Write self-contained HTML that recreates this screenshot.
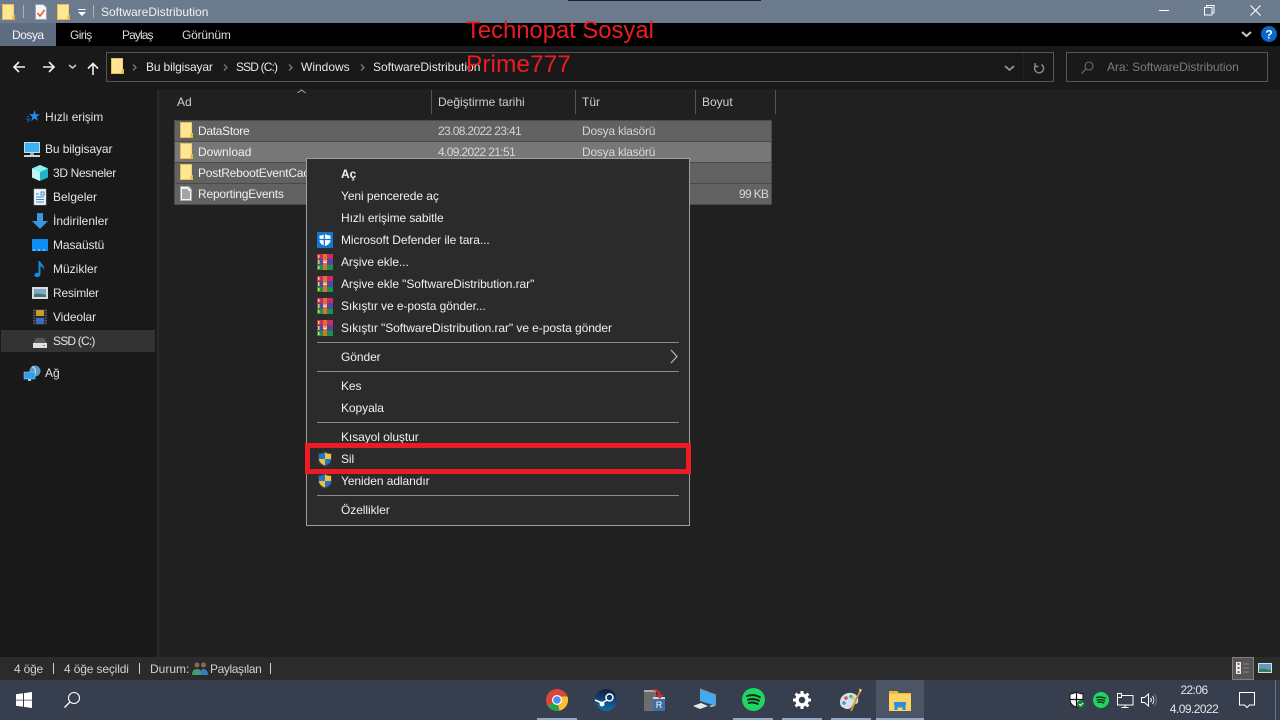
<!DOCTYPE html>
<html lang="tr"><head><meta charset="utf-8"><title>SoftwareDistribution</title>
<style>
html,body{margin:0;padding:0;width:1280px;height:720px;overflow:hidden;background:#202020}
body{font-family:"Liberation Sans",sans-serif;font-size:12px;color:#e4e4e4;position:relative}
.a{position:absolute}
.t{position:absolute;white-space:nowrap;line-height:16px;height:16px}
svg{position:absolute;overflow:visible}
.sep{position:absolute;left:317px;width:362px;height:1px;background:#8a8a8a}
.m{color:#f0f0f0;letter-spacing:-.07px}
.ul{position:absolute;top:718px;height:2px;background:#93a8c8}
</style></head><body>
<svg width="0" height="0" style="position:absolute"><defs>
<symbol id="folder" viewBox="0 0 13 16"><path d="M0 0h12v11h1v5H0z" fill="#e9bf55"/><path d="M1 1h10.500v10.500H1z" fill="#ffe694"/><path d="M1 11h9.500v4H1z" fill="#ffe694"/><path d="M10.500 11.500H13V16h-2.500z" fill="#e6b640"/></symbol>
<symbol id="rar" viewBox="0 0 16 16"><rect x="0" y="0" width="16" height="5" fill="#c92c66"/><rect x="0" y="5" width="16" height="6" fill="#54479f"/><rect x="0" y="11" width="16" height="5" fill="#17964a"/><rect x="6" y="0" width="4" height="16" fill="#e0702a"/><rect x="1" y="1" width="1.500" height="3" fill="#f5d040"/><rect x="1" y="6" width="1.500" height="4" fill="#f5d040"/><rect x="1" y="12" width="1.500" height="3" fill="#f5d040"/><path d="M6.500 6v3h3V6H8.700v2H7.300V6z" fill="#fff"/></symbol>
<symbol id="uac" viewBox="0 0 14 16"><path d="M7 0c2 1.500 4 2 7 2v6c0 4-3 6.500-7 8-4-1.500-7-4-7-8V2c3 0 5-.5 7-2z" fill="#3a3f48"/><path d="M7 1.500V8H1V3c2.500 0 4.500-.5 6-1.500z" fill="#1a78d0"/><path d="M7 1.500c1.500 1 3.500 1.500 6 1.500v5H7z" fill="#f6c235"/><path d="M1 8h6v6.500C3.500 13.200 1 11 1 8z" fill="#f6c235"/><path d="M7 8h6c0 3-2.500 5.200-6 6.500z" fill="#1a78d0"/></symbol>
</defs></svg>

<!-- title bar -->
<div class="a" style="left:0;top:0;width:1280px;height:23px;background:#6b7a8d"></div>
<div class="a" style="left:568px;top:0;width:193px;height:1px;background:#222"></div>
<svg style="left:2px;top:4px" width="13" height="16"><use href="#folder" width="13" height="16"/></svg>
<div class="a" style="left:23px;top:5px;width:1px;height:13px;background:#a9b2be"></div>
<svg style="left:35px;top:4px" width="12" height="16"><path d="M.5.5h8l3 3v12H.5z" fill="#f7f7f7" stroke="#9aa3ad"/><path d="M2.500 9l2.500 3 4.500-6" stroke="#e2572a" stroke-width="1.500" fill="none"/></svg>
<svg style="left:57px;top:4px" width="13" height="16"><use href="#folder" width="13" height="16"/></svg>
<svg style="left:78px;top:9px" width="10" height="8"><path d="M0 .5h7.500" stroke="#fff"/><path d="M0 3h8L4 7z" fill="#fff"/></svg>
<div class="a" style="left:93px;top:5px;width:1px;height:13px;background:#a9b2be"></div>
<div class="t" style="left:101px;top:4px;color:#f2f2f2">SoftwareDistribution</div>
<svg style="left:1159px;top:10px" width="11" height="2"><rect width="10" height="1" fill="#fff"/></svg>
<svg style="left:1204px;top:5px" width="11" height="11"><path d="M.5 2.500h7.500v7.500H.5zM2.500 2.500V.5H10v7.500H8" fill="none" stroke="#fff"/></svg>
<svg style="left:1250px;top:5px" width="11" height="11"><path d="M.5.500l10 10M10.500.500l-10 10" stroke="#fff" stroke-width="1.100"/></svg>

<!-- ribbon tabs -->
<div class="a" style="left:0;top:23px;width:1280px;height:23px;background:#000"></div>
<div class="a" style="left:0;top:23px;width:56px;height:23px;background:#5d6c80"></div>
<div class="t" style="left:12px;top:27px;color:#f4f4f4;letter-spacing:-.5px">Dosya</div>
<div class="t" style="left:70px;top:27px;color:#ddd;letter-spacing:-.6px">Giriş</div>
<div class="t" style="left:122px;top:27px;color:#ddd;letter-spacing:-.9px">Paylaş</div>
<div class="t" style="left:182px;top:27px;color:#ddd;letter-spacing:-.2px">Görünüm</div>
<svg style="left:1241px;top:31px" width="11" height="7"><path d="M1 1l4.500 4L10 1" fill="none" stroke="#c8c8c8" stroke-width="2"/></svg>
<svg style="left:1261px;top:26px" width="16" height="16"><circle cx="8" cy="8" r="8" fill="#0a66c8"/><text x="8" y="12.500" font-family="Liberation Sans" font-size="12" font-weight="700" fill="#fff" text-anchor="middle">?</text></svg>

<!-- toolbar -->
<div class="a" style="left:0;top:46px;width:1280px;height:43px;background:#191919"></div>
<svg style="left:13px;top:61px" width="13" height="12"><path d="M12 6H1.500M6 1L1 6l5 5" fill="none" stroke="#f0f0f0" stroke-width="1.600"/></svg>
<svg style="left:43px;top:61px" width="13" height="12"><path d="M0 6h10.500M6 1l5 5-5 5" fill="none" stroke="#f0f0f0" stroke-width="1.600"/></svg>
<svg style="left:68px;top:64px" width="9" height="6"><path d="M1 1l3.500 3L8 1" fill="none" stroke="#ccc" stroke-width="1.500"/></svg>
<svg style="left:87px;top:62px" width="12" height="13"><path d="M6 13V2M1 6.500l5-5 5 5" fill="none" stroke="#f0f0f0" stroke-width="1.600"/></svg>
<div class="a" style="left:106px;top:52px;width:946px;height:28px;border:1px solid #555;background:#181818"></div>
<svg style="left:111px;top:58px" width="13" height="16"><use href="#folder" width="13" height="16"/></svg>
<svg style="left:132px;top:64px" width="6" height="8"><path d="M1 .5l3 3-3 3" fill="none" stroke="#777" stroke-width="1.400"/></svg>
<div class="t" style="left:146px;top:59px;color:#e8e8e8;letter-spacing:-.15px">Bu bilgisayar</div>
<svg style="left:223px;top:64px" width="6" height="8"><path d="M1 .5l3 3-3 3" fill="none" stroke="#777" stroke-width="1.400"/></svg>
<div class="t" style="left:236px;top:59px;color:#e8e8e8;letter-spacing:-.85px">SSD (C:)</div>
<svg style="left:288px;top:64px" width="6" height="8"><path d="M1 .5l3 3-3 3" fill="none" stroke="#777" stroke-width="1.400"/></svg>
<div class="t" style="left:301px;top:59px;color:#e8e8e8">Windows</div>
<svg style="left:360px;top:64px" width="6" height="8"><path d="M1 .5l3 3-3 3" fill="none" stroke="#777" stroke-width="1.400"/></svg>
<div class="t" style="left:373px;top:59px;color:#e8e8e8">SoftwareDistribution</div>
<svg style="left:1004px;top:65px" width="11" height="7"><path d="M1 1l4.500 4L10 1" fill="none" stroke="#999" stroke-width="1.700"/></svg>
<div class="a" style="left:1023px;top:53px;width:1px;height:27px;background:#232323"></div>
<svg style="left:1033px;top:62px" width="12" height="12"><path d="M3 3a4.500 4.500 0 1 0 5.500-.5" fill="none" stroke="#8a8a8a" stroke-width="1.400"/><path d="M2 1v3.500h3.500" fill="none" stroke="#8a8a8a" stroke-width="1.400"/></svg>
<div class="a" style="left:1066px;top:52px;width:200px;height:28px;border:1px solid #555;background:#191919"></div>
<svg style="left:1081px;top:61px" width="13" height="13"><circle cx="8" cy="5" r="4" fill="none" stroke="#6e6e6e" stroke-width="1.100"/><path d="M5 8l-4.500 4.500" stroke="#6e6e6e" stroke-width="1.200"/></svg>
<div class="t" style="left:1107px;top:59px;color:#7c7c7c;letter-spacing:-.04px">Ara: SoftwareDistribution</div>

<!-- sidebar -->
<div class="a" style="left:0;top:89px;width:157px;height:568px;background:#191919"></div>
<div class="a" style="left:157px;top:89px;width:2px;height:568px;background:#2a2a2a"></div>
<div class="a" style="left:1px;top:330px;width:154px;height:22px;background:#333"></div>
<svg style="left:26px;top:110px" width="14" height="14"><path d="M8.500 0l1.300 4.200H14l-3.400 2.600 1.300 4.200-3.400-2.600-3.400 2.600 1.300-4.200L3 4.200h4.200z" fill="#1e90f0"/><path d="M0 9h4M1 6.500h2M1 12l3-2" stroke="#1670bb"/></svg>
<div class="t" style="left:45px;top:109px;letter-spacing:-.1px">Hızlı erişim</div>
<svg style="left:24px;top:142px" width="16" height="15"><rect x=".5" y=".5" width="15" height="10" fill="#3fb0f0" stroke="#bcdcf0"/><rect x="6" y="11" width="4" height="2" fill="#9aa"/><rect y="13" width="16" height="2" fill="#cfd4d8"/></svg>
<div class="t" style="left:45px;top:141px;letter-spacing:-.1px">Bu bilgisayar</div>
<svg style="left:32px;top:165px" width="16" height="16"><path d="M8 0l8 3.500v9L8 16l-8-3.500v-9z" fill="#1fb6c8"/><path d="M8 0l8 3.500L8 7 0 3.500z" fill="#8ef0f0"/><path d="M0 3.500L8 7v9l-8-3.500z" fill="#c4f6f6"/></svg>
<div class="t" style="left:53px;top:165px;letter-spacing:-.35px">3D Nesneler</div>
<svg style="left:34px;top:189px" width="12" height="16"><rect width="12" height="16" fill="#f2f4f6" stroke="#bbb" stroke-width=".5"/><path d="M2 5h3M2 8h8M2 10.500h8M2 13h8M7 3h3v3H7z" stroke="#2f8fd8" fill="none"/></svg>
<div class="t" style="left:53px;top:189px">Belgeler</div>
<svg style="left:32px;top:213px" width="16" height="16"><path d="M5 0h6v8h5l-8 8-8-8h5z" fill="#3a96e0"/></svg>
<div class="t" style="left:53px;top:213px">İndirilenler</div>
<svg style="left:32px;top:239px" width="16" height="12"><rect width="16" height="12" fill="#0d8ef0"/><path d="M1 11h14" stroke="#bfe4ff" stroke-dasharray="2 3"/></svg>
<div class="t" style="left:53px;top:237px;letter-spacing:-.1px">Masaüstü</div>
<svg style="left:34px;top:261px" width="12" height="16"><path d="M4.500 0h1.500c.5 3 5 4 4 9-.5-2-2-3.500-3.500-4v8.500c0 1.500-1.500 2.500-3.500 2.500S0 15 .5 13.500 3 11.500 4.500 12z" fill="#0f8fe0"/></svg>
<div class="t" style="left:53px;top:261px">Müzikler</div>
<svg style="left:32px;top:287px" width="16" height="12"><rect width="16" height="12" fill="#d8dce0"/><rect x="2" y="2" width="12" height="8" fill="#7da6c8"/><path d="M2 7c4-1 8 0 12 1v2H2z" fill="#3f7a63"/></svg>
<div class="t" style="left:53px;top:285px;letter-spacing:-.2px">Resimler</div>
<svg style="left:33px;top:309px" width="14" height="16"><rect width="14" height="16" fill="#2c2c2c"/><rect x="3" y="1" width="8" height="6" fill="#c79a30"/><rect x="3" y="9" width="8" height="6" fill="#3a6ec0"/><path d="M1 1v14M13 1v14" stroke="#888" stroke-dasharray="1 1.500"/></svg>
<div class="t" style="left:53px;top:309px;letter-spacing:-.1px">Videolar</div>
<svg style="left:33px;top:338px" width="14" height="10"><path d="M3 0h8l3 6v4H0V6z" fill="#5a5a5a"/><rect y="5" width="14" height="5" fill="#e0e0e0"/><rect x="10" y="7" width="2" height="1" fill="#2fbf55"/></svg>
<div class="t" style="left:53px;top:333px;letter-spacing:-.8px">SSD (C:)</div>
<svg style="left:24px;top:365px" width="17" height="16"><circle cx="11" cy="6" r="5.500" fill="#5a9cc8"/><path d="M8 1.500c3 1 5 5 2 9" stroke="#cfe7f5" fill="none"/><rect y="7" width="11" height="7" fill="#2d9fe8" stroke="#a6d8f6" stroke-width=".5"/><rect x="4" y="14" width="3" height="2" fill="#b8c4cc"/></svg>
<div class="t" style="left:45px;top:365px">Ağ</div>

<!-- headers -->
<svg style="left:297px;top:89px" width="9" height="5"><path d="M.5 4l4-3 4 3" fill="none" stroke="#aaa"/></svg>
<div class="t" style="left:177px;top:94px;color:#cfcfcf">Ad</div>
<div class="a" style="left:431px;top:90px;width:1px;height:24px;background:#555"></div>
<div class="t" style="left:438px;top:94px;color:#cfcfcf">Değiştirme tarihi</div>
<div class="a" style="left:575px;top:90px;width:1px;height:24px;background:#555"></div>
<div class="t" style="left:582px;top:94px;color:#cfcfcf">Tür</div>
<div class="a" style="left:695px;top:90px;width:1px;height:24px;background:#555"></div>
<div class="t" style="left:702px;top:94px;color:#cfcfcf">Boyut</div>
<div class="a" style="left:775px;top:90px;width:1px;height:24px;background:#555"></div>

<!-- rows -->
<div class="a" style="left:174px;top:120px;width:598px;height:85px;background:#4a4a4a"></div>
<div class="a" style="left:175px;top:121px;width:596px;height:20px;background:#626262"></div>
<div class="a" style="left:175px;top:142px;width:596px;height:20px;background:#777"></div>
<div class="a" style="left:175px;top:163px;width:596px;height:20px;background:#626262"></div>
<div class="a" style="left:175px;top:184px;width:596px;height:20px;background:#626262"></div>
<svg style="left:180px;top:122px" width="13" height="16"><use href="#folder" width="13" height="16"/></svg>
<svg style="left:180px;top:143px" width="13" height="16"><use href="#folder" width="13" height="16"/></svg>
<svg style="left:180px;top:164px" width="13" height="16"><use href="#folder" width="13" height="16"/></svg>
<svg style="left:180px;top:186px" width="12" height="15"><path d="M.5.5h8l3 3v11H.5z" fill="#f2f2f2" stroke="#aaa"/><path d="M2 4h6M2 6h8M2 8h8M2 10h8M2 12h8" stroke="#555"/></svg>
<div class="t" style="left:198px;top:123px;color:#f0f0f0;letter-spacing:-.3px">DataStore</div>
<div class="t" style="left:198px;top:144px;color:#f0f0f0">Download</div>
<div class="t" style="left:198px;top:165px;color:#f0f0f0;letter-spacing:-.2px">PostRebootEventCache</div>
<div class="t" style="left:198px;top:186px;color:#f0f0f0;letter-spacing:-.2px">ReportingEvents</div>
<div class="t" style="left:438px;top:123px;color:#d4d4d4;letter-spacing:-.65px">23.08.2022 23:41</div>
<div class="t" style="left:438px;top:144px;color:#d8d8d8;letter-spacing:-.65px">4.09.2022 21:51</div>
<div class="t" style="left:582px;top:123px;color:#d4d4d4;letter-spacing:-.22px">Dosya klasörü</div>
<div class="t" style="left:582px;top:144px;color:#d8d8d8;letter-spacing:-.22px">Dosya klasörü</div>
<div class="t" style="left:739px;top:186px;color:#d8d8d8;letter-spacing:-.7px">99 KB</div>

<!-- context menu -->
<div class="a" style="left:306px;top:158px;width:382px;height:366px;background:#2b2b2b;border:1px solid #a0a0a0"></div>
<div class="t m" style="left:341px;top:166px;font-weight:700">Aç</div>
<div class="t m" style="left:341px;top:188px">Yeni pencerede aç</div>
<div class="t m" style="left:341px;top:210px">Hızlı erişime sabitle</div>
<svg style="left:317px;top:232px" width="16" height="16"><rect width="16" height="16" fill="#0f78d4"/><path d="M8 2c1.500 1 3.500 1.500 5.500 1.500V8c0 3-2.500 5-5.500 6-3-1-5.500-3-5.500-6V3.500C4.500 3.500 6.500 3 8 2z" fill="#fff"/><path d="M7.300 2v12M2.500 7.500h11" stroke="#0f78d4" stroke-width="1.300"/></svg>
<div class="t m" style="left:341px;top:232px">Microsoft Defender ile tara...</div>
<svg style="left:317px;top:254px" width="16" height="16"><use href="#rar" width="16" height="16"/></svg>
<div class="t m" style="left:341px;top:254px">Arşive ekle...</div>
<svg style="left:317px;top:276px" width="16" height="16"><use href="#rar" width="16" height="16"/></svg>
<div class="t m" style="left:341px;top:276px">Arşive ekle "SoftwareDistribution.rar"</div>
<svg style="left:317px;top:298px" width="16" height="16"><use href="#rar" width="16" height="16"/></svg>
<div class="t m" style="left:341px;top:298px">Sıkıştır ve e-posta gönder...</div>
<svg style="left:317px;top:320px" width="16" height="16"><use href="#rar" width="16" height="16"/></svg>
<div class="t m" style="left:341px;top:320px">Sıkıştır "SoftwareDistribution.rar" ve e-posta gönder</div>
<div class="sep" style="top:342px"></div>
<div class="t m" style="left:341px;top:349px">Gönder</div>
<svg style="left:670px;top:349px" width="9" height="15"><path d="M1 1l6 6.500L1 14" fill="none" stroke="#c8c0b0" stroke-width="1.100"/></svg>
<div class="sep" style="top:371px"></div>
<div class="t m" style="left:341px;top:378px">Kes</div>
<div class="t m" style="left:341px;top:400px">Kopyala</div>
<div class="sep" style="top:422px"></div>
<div class="t m" style="left:341px;top:429px">Kısayol oluştur</div>
<svg style="left:318px;top:451px" width="14" height="16"><use href="#uac" width="14" height="16"/></svg>
<div class="t m" style="left:341px;top:451px">Sil</div>
<svg style="left:318px;top:473px" width="14" height="16"><use href="#uac" width="14" height="16"/></svg>
<div class="t m" style="left:341px;top:473px">Yeniden adlandır</div>
<div class="sep" style="top:495px"></div>
<div class="t m" style="left:341px;top:502px">Özellikler</div>
<div class="a" style="left:305px;top:443px;width:376px;height:21px;border:5px solid #ed1c24"></div>

<!-- red annotations -->
<div class="t" style="left:466px;top:16px;height:30px;line-height:30px;font-size:23.800px;color:#ed1c24">Technopat Sosyal</div>
<div class="t" style="left:466px;top:50px;height:30px;line-height:30px;font-size:24.500px;color:#ed1c24">Prime777</div>

<!-- status bar -->
<div class="a" style="left:0;top:657px;width:1280px;height:23px;background:#2b2b2b"></div>
<div class="t" style="left:14px;top:661px;color:#d0d0d0;letter-spacing:-.2px">4 öğe</div>
<div class="a" style="left:53px;top:663px;width:1px;height:11px;background:#d0d0d0"></div>
<div class="t" style="left:64px;top:661px;color:#d0d0d0;letter-spacing:-.15px">4 öğe seçildi</div>
<div class="a" style="left:139px;top:663px;width:1px;height:11px;background:#d0d0d0"></div>
<div class="t" style="left:150px;top:661px;color:#d0d0d0">Durum:</div>
<svg style="left:192px;top:662px" width="16" height="13"><circle cx="5" cy="3" r="2.500" fill="#8a6a4a"/><circle cx="11.500" cy="3" r="2.500" fill="#8a6a4a"/><path d="M8 13c0-4 1-6 3.500-6S16 9 16 13z" fill="#2c7fc4"/><path d="M0 13c0-4 1.500-6 5-6s4 2 4 6z" fill="#4a9a6a"/></svg>
<div class="t" style="left:210px;top:661px;color:#d0d0d0;letter-spacing:-.4px">Paylaşılan</div>
<div class="a" style="left:270px;top:663px;width:1px;height:11px;background:#d0d0d0"></div>
<div class="a" style="left:1232px;top:657px;width:20px;height:21px;border:1px solid #808080;background:#555"></div>
<svg style="left:1236px;top:662px" width="14" height="13"><rect width="5" height="12" fill="#eee"/><rect x="1.500" y="1" width="2" height="2" fill="#c33"/><rect x="1.500" y="5" width="2" height="2" fill="#37a"/><rect x="1.500" y="9" width="2" height="2" fill="#c33"/><path d="M7 2h6M7 6h6M7 10h6" stroke="#888"/></svg>
<svg style="left:1258px;top:663px" width="14" height="10"><rect width="14" height="10" fill="#d8dce0"/><rect x="1" y="1" width="12" height="8" fill="#5f9cc0"/><path d="M1 6c4-1 8 0 12 1v2H1z" fill="#3c7a63"/></svg>

<!-- taskbar -->
<div class="a" style="left:0;top:680px;width:1280px;height:40px;background:#373f4e"></div>
<svg style="left:16px;top:692px" width="16" height="16"><path d="M0 2.300l7-1v6.400H0zM8 1.100L16 0v7.700H8zM0 8.500h7v6.300l-7-1zM8 8.500h8V16l-8-1.100z" fill="#fff"/></svg>
<svg style="left:64px;top:692px" width="16" height="16"><circle cx="10" cy="6" r="5.500" fill="none" stroke="#fff" stroke-width="1.100"/><path d="M6 10l-5.500 5.500" stroke="#fff" stroke-width="1.300"/></svg>
<div class="a" style="left:876px;top:680px;width:48px;height:40px;background:#4b5565"></div>
<div class="ul" style="left:537px;width:40px"></div>
<div class="ul" style="left:733px;width:40px"></div>
<div class="ul" style="left:782px;width:40px"></div>
<div class="ul" style="left:831px;width:40px"></div>
<div class="ul" style="left:876px;width:48px"></div>
<svg style="left:546px;top:689px" width="22" height="22" viewBox="0 0 22 22"><circle cx="11" cy="11" r="11" fill="#de4437"/><path d="M11 11L1.500 16.500A11 11 0 0 0 11 22c1 0 2-.1 2.500-.3z" fill="#2ba34d"/><path d="M11 11l2.500 10.700A11 11 0 0 0 21.500 7.500H11z" fill="#fbc02d"/><circle cx="11" cy="11" r="5" fill="#fff"/><circle cx="11" cy="11" r="3.800" fill="#4a8ff0"/></svg>
<svg style="left:595px;top:689px" width="22" height="22" viewBox="0 0 22 22"><defs><linearGradient id="st" x1="0" y1="0" x2="0" y2="1"><stop offset="0" stop-color="#111c3a"/><stop offset="1" stop-color="#0f6fb0"/></linearGradient></defs><circle cx="11" cy="11" r="11" fill="url(#st)"/><circle cx="14.500" cy="8.500" r="3.500" fill="none" stroke="#fff" stroke-width="1.500"/><circle cx="7" cy="15" r="2.500" fill="#fff"/><path d="M0 11l7 3 5-3" stroke="#fff" stroke-width="1.500" fill="none"/></svg>
<svg style="left:644px;top:688px" width="22" height="24" viewBox="0 0 22 24"><rect x="0" y="3" width="12" height="20" fill="#6d6d6d"/><path d="M0 3h12" stroke="#aaa" stroke-width="2"/><rect x="9" y="10" width="12" height="13" fill="#3c6ea8"/><path d="M9 10h12" stroke="#cfd6df" stroke-width="2"/><path d="M7 2c5-2 9 0 10 5l3-1-4 5-4-4 3 0c-1-3-4-5-8-5z" fill="#d92a2a"/><text x="15" y="20" font-family="Liberation Sans" font-size="9" fill="#fff" text-anchor="middle">R</text></svg>
<svg style="left:693px;top:689px" width="23" height="21" viewBox="0 0 23 21"><path d="M7 0l16 6v11L7 12z" fill="#45a9ee"/><path d="M7 0l16 6" stroke="#8a8f96"/><path d="M0 17l8-3 7 3-8 3z" fill="#e8e8e8"/><path d="M16 17l4-1 2 1-4 1z" fill="#ccc"/></svg>
<svg style="left:742px;top:688px" width="23" height="23" viewBox="0 0 23 23"><circle cx="11.500" cy="11.500" r="11.500" fill="#1ed760"/><path d="M5 8c4-1.200 9-1 13 1.200M6 11.700c3.500-1 7.500-.8 11 1M6.800 15c3-.8 6-.6 9 .9" stroke="#162a1c" stroke-width="2" stroke-linecap="round" fill="none"/></svg>
<svg style="left:793px;top:691px" width="18" height="18" viewBox="0 0 18 18"><circle cx="9" cy="9" r="5" fill="none" stroke="#fff" stroke-width="3.500"/><path d="M9 0v3M9 15v3M0 9h3M15 9h3M2.600 2.600l2.100 2.100M13.300 13.300l2.100 2.100M2.600 15.400l2.100-2.100M13.300 4.700l2.100-2.100" stroke="#fff" stroke-width="3"/></svg>
<svg style="left:839px;top:688px" width="24" height="24" viewBox="0 0 24 24"><path d="M1 14C1 8 7 4 13 5c5 1 7 5 6 9-1 3-5 2-6 4-1 3-5 4-8 2-3-1-4-3-4-6z" fill="#cfe2ee"/><circle cx="7" cy="10" r="1.800" fill="#d9534f"/><circle cx="12" cy="8.500" r="1.800" fill="#5cb85c"/><circle cx="5" cy="15" r="1.800" fill="#4a90d9"/><circle cx="15" cy="11" r="1.500" fill="#f0c040"/><path d="M22 1l-10 22" stroke="#d99030" stroke-width="1.800"/><path d="M20 .5l3 1.500-2 3z" fill="#e9d0a0"/></svg>
<svg style="left:889px;top:691px" width="22" height="20" viewBox="0 0 22 20"><path d="M0 0h8l2 2h12v4H0z" fill="#f0b93a"/><rect y="3" width="22" height="17" fill="#fcd462"/><path d="M7 19v-4h8v4" fill="none" stroke="#2a8fe0" stroke-width="3"/><rect x="5" y="11" width="12" height="3" fill="#2a8fe0"/></svg>

<!-- tray -->
<svg style="left:1069px;top:692px" width="16" height="16" viewBox="0 0 16 16"><path d="M7.500 0c2 1.300 4 1.800 6.500 2v6c0 3.500-3 6-6.500 7.500C4 14 1 11.500 1 8V2c2.500-.2 4.500-.7 6.500-2z" fill="#fff" stroke="#111"/><path d="M7.500 0v15.500M1 7.500h13" stroke="#111" stroke-width="1.200"/><circle cx="12" cy="12" r="4" fill="#117a3d"/><path d="M10 12l1.500 1.500L14 11" stroke="#fff" fill="none"/></svg>
<svg style="left:1093px;top:692px" width="16" height="16" viewBox="0 0 16 16"><circle cx="8" cy="8" r="8" fill="#1ed760"/><path d="M3.500 5.500c3-.8 6-.6 9 .8M4.200 8c2.500-.7 5-.5 7.500.7M4.800 10.300c2-.5 4-.4 6 .6" stroke="#162a1c" stroke-width="1.400" stroke-linecap="round" fill="none"/></svg>
<svg style="left:1117px;top:693px" width="17" height="15" viewBox="0 0 17 15"><path d="M.5 2.500v9.500h15.500V2.500H5" fill="none" stroke="#fff"/><rect x=".5" y=".5" width="4" height="4" fill="#373f4e" stroke="#fff"/><path d="M8 12v2M4.500 14.500h7" stroke="#fff"/></svg>
<svg style="left:1141px;top:693px" width="16" height="14" viewBox="0 0 16 14"><path d="M.5 4.500h3L7.500 1v12l-4-3.500h-3z" fill="none" stroke="#fff"/><path d="M9.500 5c1 1.200 1 2.800 0 4" fill="none" stroke="#fff"/><path d="M11.500 3c1.800 2.200 1.800 5.800 0 8" fill="none" stroke="#ddd"/><path d="M13.500 1c2.500 3.500 2.500 8.500 0 12" fill="none" stroke="#777"/></svg>
<div class="t" style="left:1164px;top:682px;width:60px;text-align:center;color:#e4e4e4;letter-spacing:-.6px">22:06</div>
<div class="t" style="left:1164px;top:701px;width:60px;text-align:center;color:#e4e4e4;letter-spacing:-.55px">4.09.2022</div>
<svg style="left:1239px;top:692px" width="17" height="16" viewBox="0 0 17 16"><path d="M.5.500h15v12.500h-5l-2.500 2.500-2.500-2.500h-5z" fill="none" stroke="#fff"/></svg>
<div class="a" style="left:1275px;top:680px;width:1px;height:40px;background:#6a7280"></div>
</body></html>
